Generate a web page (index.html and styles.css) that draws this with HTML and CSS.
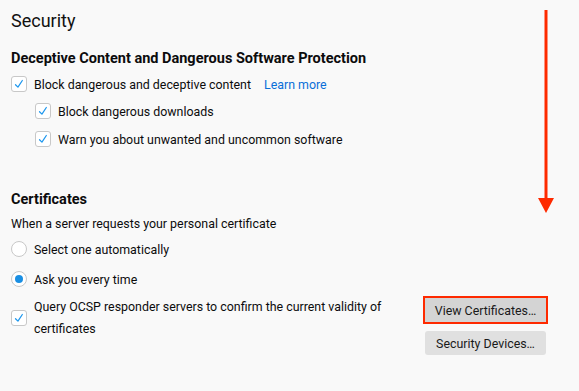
FILE: index.html
```html
<!DOCTYPE html>
<html lang="en">
<head>
    <meta charset="UTF-8">
    <title>Security</title>
    <link rel="stylesheet" href="styles.css">
</head>
<body>
    <div class="pane">
        <h1 class="title">Security</h1>

        <h2 class="section section-first">Deceptive Content and Dangerous Software Protection</h2>
        <label class="row row-1">
            <span class="check"><svg viewBox="0 0 16 16"><path d="M4 8.8 L6.8 11.6 L11.8 4"/></svg></span>
            <span>Block dangerous and deceptive content</span>
            <a class="link" href="#">Learn more</a>
        </label>
        <label class="row row-sub row-2">
            <span class="check"><svg viewBox="0 0 16 16"><path d="M4 8.8 L6.8 11.6 L11.8 4"/></svg></span>
            <span>Block dangerous downloads</span>
        </label>
        <label class="row row-sub row-3">
            <span class="check"><svg viewBox="0 0 16 16"><path d="M4 8.8 L6.8 11.6 L11.8 4"/></svg></span>
            <span>Warn you about unwanted and uncommon software</span>
        </label>

        <h2 class="section section-cert">Certificates</h2>
        <p class="desc">When a server requests your personal certificate</p>
        <label class="row row-radio-1">
            <span class="radio"></span>
            <span>Select one automatically</span>
        </label>
        <label class="row row-radio-2">
            <span class="radio radio-on"></span>
            <span>Ask you every time</span>
        </label>

        <div class="ocsp">
            <label class="ocsp-option">
                <span class="check"><svg viewBox="0 0 16 16"><path d="M4 8.8 L6.8 11.6 L11.8 4"/></svg></span>
                <span class="ocsp-text">Query OCSP responder servers to confirm the current validity of certificates</span>
            </label>
            <div class="buttons">
                <button class="btn btn-marked">View Certificates…</button>
                <button class="btn">Security Devices…</button>
            </div>
        </div>
    </div>

    <svg class="arrow" width="20" height="210" viewBox="0 0 20 210">
        <line x1="10" y1="0" x2="10" y2="190" stroke="#fe2a00" stroke-width="3"/>
        <polygon points="2,188 18,188 10,203" fill="#fe2a00"/>
    </svg>
</body>
</html>
```

FILE: styles.css
```css
* { box-sizing: border-box; margin: 0; padding: 0; }
body { background-color: #f9f9f9; color: #0c0c0d; font-family: Roboto, "Noto Sans", sans-serif; font-size: 12.4px; }
.pane { display: flex; flex-direction: column; align-items: flex-start; padding-left: 11px; }

.title { font-size: 18px; font-weight: 400; line-height: 28px; margin-top: 7px; color: #111; }
.section { font-size: 14.5px; font-weight: 700; line-height: 20px; }
.section-first { margin-top: 14px; }
.section-cert { margin-top: 39px; }
.desc { line-height: 20px; margin-top: 4px; }

.row { display: flex; align-items: center; gap: 7px; height: 24px; }
.row-1 { margin-top: 3px; }
.row-2 { margin-top: 3px; }
.row-3 { margin-top: 4px; }
.row-sub { margin-left: 24px; }
.row-radio-1 { margin-top: 3px; }
.row-radio-2 { margin-top: 6px; }

.link { color: #0a6fd8; text-decoration: none; margin-left: 6px; }

.check { width: 16px; height: 16px; flex: none; background: #fff; border: 1px solid #c8c8c8; border-radius: 3px; display: flex; }
.check svg { width: 14px; height: 14px; }
.check path { fill: none; stroke: #1d97ee; stroke-width: 1.4; stroke-linecap: round; stroke-linejoin: round; }

.radio { width: 16px; height: 16px; flex: none; background: #fff; border: 1px solid #c8c8c8; border-radius: 50%; display: flex; align-items: center; justify-content: center; }
.radio-on::after { content: ""; width: 8px; height: 8px; border-radius: 50%; background: #1a8fe3; }

.ocsp { display: flex; align-items: flex-start; align-self: stretch; margin-top: 5px; }
.ocsp-option { display: flex; align-items: center; gap: 7px; width: 392px; }
.ocsp-text { line-height: 22px; }
.buttons { display: flex; flex-direction: column; align-items: center; gap: 9px; margin-left: auto; margin-right: 33px; padding-top: 2px; }
.btn { font-family: inherit; font-size: 12.4px; color: #1a1a1a; background: #e0e0e0; border: none; border-radius: 3px; height: 24px; width: 121px; }
.btn-marked { background: #d4d4d4; outline: 2px solid #fe2a00; outline-offset: 0; border-radius: 0; width: 121px; }

.arrow { position: absolute; left: 536px; top: 10px; }
```
